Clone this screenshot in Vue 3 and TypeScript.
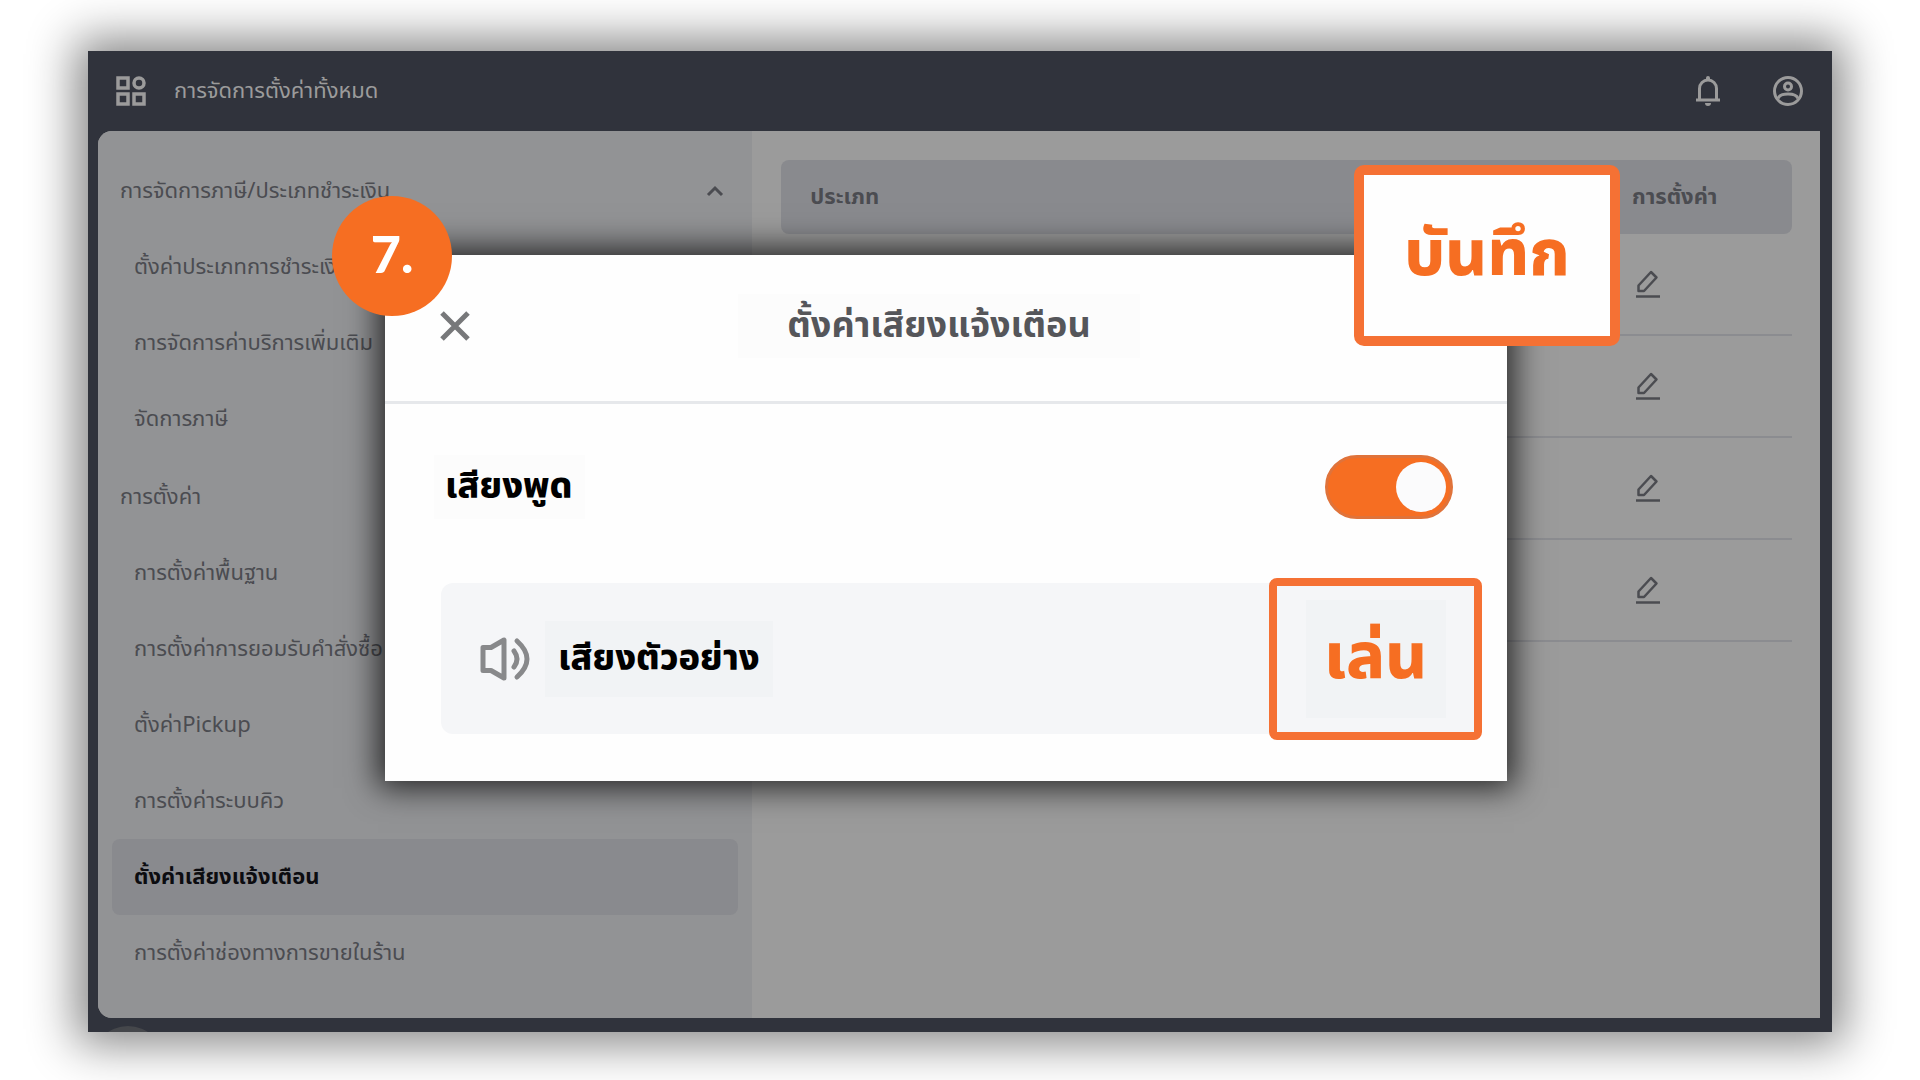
<script setup lang="ts">
import { ref } from 'vue'

interface MenuGroup {
  title: string
  open: boolean
  items: string[]
}

const groups: MenuGroup[] = [
  {
    title: 'การจัดการภาษี/ประเภทชำระเงิน',
    open: true,
    items: ['ตั้งค่าประเภทการชำระเงิน', 'การจัดการค่าบริการเพิ่มเติม', 'จัดการภาษี'],
  },
  {
    title: 'การตั้งค่า',
    open: false,
    items: [
      'การตั้งค่าพื้นฐาน',
      'การตั้งค่าการยอมรับคำสั่งซื้อ',
      'ตั้งค่าPickup',
      'การตั้งค่าระบบคิว',
      'ตั้งค่าเสียงแจ้งเตือน',
      'การตั้งค่าช่องทางการขายในร้าน',
    ],
  },
]

const active = ref('ตั้งค่าเสียงแจ้งเตือน')
const voiceOn = ref(true)
const rows = [1, 2, 3, 4]
</script>

<template>
  <div class="page">
    <div class="frame">
      <header class="topbar">
        <svg class="icon-apps" viewBox="0 0 30 30" aria-hidden="true">
          <rect x="2" y="2" width="10" height="10" />
          <circle cx="23" cy="7" r="5" />
          <rect x="2" y="18" width="10" height="10" />
          <rect x="18" y="18" width="10" height="10" />
        </svg>
        <span class="topbar-title">การจัดการตั้งค่าทั้งหมด</span>
        <button class="icon-btn" type="button" aria-label="notifications">
          <svg viewBox="0 0 30 30">
            <path d="M3 24H27M6.500 24V12.500a8.500 8.500 0 0 1 17 0V24" />
            <path class="solid" d="M13 4V2a2 2 0 0 1 4 0v2zM12 27h6a3 3 0 0 1-6 0z" />
          </svg>
        </button>
        <button class="icon-btn" type="button" aria-label="account">
          <svg viewBox="0 0 30 30">
            <circle cx="15" cy="15" r="13.500" />
            <circle cx="15" cy="10.500" r="3.500" />
            <path d="M5 22.500C7 16.500 23 16.500 25 22.500" />
          </svg>
        </button>
      </header>

      <div class="body">
        <nav class="sidebar">
          <section v-for="g in groups" :key="g.title" class="group">
            <button class="group-title" type="button">
              <span>{{ g.title }}</span>
              <svg v-if="g.open" class="chevron" viewBox="0 0 18 12" aria-hidden="true">
                <path d="M2 10L9 3L16 10" />
              </svg>
            </button>
            <a
              v-for="item in g.items"
              :key="item"
              href="#"
              class="item"
              :class="{ active: item === active }"
              @click.prevent="active = item"
            >{{ item }}</a>
          </section>
        </nav>

        <main class="content">
          <table class="table">
            <thead>
              <tr>
                <th scope="col">ประเภท</th>
                <th scope="col" class="col-set">การตั้งค่า</th>
              </tr>
            </thead>
            <tbody>
              <tr v-for="r in rows" :key="r">
                <td></td>
                <td class="col-set">
                  <button class="edit" type="button" aria-label="edit">
                    <svg viewBox="0 0 24 28">
                      <path d="M2.500 21V15.500L15 2l5.500 5.500L8 21z" />
                      <path d="M0 26.500H24" />
                    </svg>
                  </button>
                </td>
              </tr>
            </tbody>
          </table>
        </main>
      </div>
      <footer class="bottom"><span class="bubble"></span></footer>

      <div class="modal" role="dialog" aria-labelledby="dlg-title">
        <div class="modal-head">
          <button class="close" type="button" aria-label="close">
            <svg viewBox="0 0 30 30"><path d="M2 2L28 28M28 2L2 28" /></svg>
          </button>
          <h1 id="dlg-title" class="modal-title">ตั้งค่าเสียงแจ้งเตือน</h1>
        </div>
        <div class="modal-body">
          <div class="voice">
            <label class="voice-label" for="voice">เสียงพูด</label>
            <input id="voice" v-model="voiceOn" class="switch" type="checkbox" role="switch" />
          </div>
          <div class="sample">
            <svg class="speaker" viewBox="0 0 50 44" aria-hidden="true">
              <path d="M3 10.500H11L24 3V41L11 33.500H3z" />
              <path d="M34 14q6 8 0 16M37 4q20 18 0 36" />
            </svg>
            <span class="sample-label">เสียงตัวอย่าง</span>
            <button class="play" type="button"><span class="play-text">เล่น</span></button>
          </div>
        </div>
        <button class="save" type="button">บันทึก</button>
        <span class="step">7.</span>
      </div>
    </div>
  </div>
</template>

<style>
body {
  margin: 0;
  background: #fff;
}
</style>

<style scoped>
* {
  box-sizing: border-box;
}
.page {
  min-height: 100vh;
  padding: 51px 88px 48px;
  font-family: 'Noto Sans Thai', 'Noto Sans', sans-serif;
  font-size: 22px;
  color: #4b4c51;
  overflow: hidden;
}
button {
  padding: 0;
  border: 0;
  background: none;
  font: inherit;
  color: inherit;
  cursor: pointer;
}
svg {
  display: block;
  fill: none;
  stroke: currentColor;
}
.frame {
  position: relative;
  background: #30333c;
  box-shadow: 0 0 44px 12px rgba(0, 0, 0, 0.48);
}
.topbar {
  display: flex;
  align-items: center;
  height: 80px;
  padding: 0 29px 0 28px;
  color: #9b9b9b;
}
.icon-apps {
  width: 30px;
  height: 30px;
  stroke-width: 3.5;
}
.topbar-title {
  flex: 1;
  margin-left: 28px;
}
.icon-btn {
  margin-left: 50px;
}
.icon-btn svg {
  width: 30px;
  height: 30px;
  stroke-width: 3;
}
.icon-btn .solid {
  fill: currentColor;
  stroke: none;
}
.body {
  display: flex;
  min-height: 887px;
  margin: 0 12px 0 10px;
  border-radius: 14px 0 0 14px;
  background: #9b9b9b;
  overflow: hidden;
}
.sidebar {
  width: 38%;
  padding: 22px 14px 0;
  background: #929395;
}
.group {
  margin-bottom: 2px;
}
.group-title {
  display: flex;
  align-items: center;
  justify-content: space-between;
  width: 100%;
  height: 76px;
  padding: 0 14px 0 8px;
  text-align: left;
}
.chevron {
  width: 18px;
  height: 12px;
  stroke-width: 3;
}
.item {
  display: flex;
  align-items: center;
  height: 76px;
  padding-left: 22px;
  border-radius: 8px;
  color: inherit;
  text-decoration: none;
}
.item.active {
  background: #898a8e;
  color: #0c0c10;
  font-weight: 700;
}
.content {
  flex: 1;
  padding: 29px 28px 0 29px;
}
.table {
  width: 100%;
  border-collapse: separate;
  border-spacing: 0;
}
.table th {
  height: 74px;
  padding: 0 0 0 29px;
  background: #898a8e;
  text-align: left;
  font-weight: 700;
}
.table th:first-child {
  border-radius: 8px 0 0 8px;
}
.table th:last-child {
  border-radius: 0 8px 8px 0;
}
.table td {
  height: 102px;
  padding: 0;
  border-bottom: 2px solid #8b8c90;
}
.table .col-set {
  width: 160px;
  padding-left: 0;
}
.edit {
  display: block;
  margin-left: 4px;
}
.edit svg {
  width: 24px;
  height: 28px;
  stroke-width: 2.5;
  stroke-linejoin: round;
}
.bottom {
  height: 14px;
  padding: 8px 0 0 4px;
  overflow: hidden;
}
.bubble {
  display: block;
  width: 72px;
  height: 72px;
  border-radius: 50%;
  background: #45474b;
}
.modal {
  position: absolute;
  top: 204px;
  left: 297px;
  right: 325px;
  background: #fefefe;
  box-shadow: 0 0 30px 7px rgba(0, 0, 0, 0.75);
}
.modal-head {
  display: flex;
  align-items: center;
  height: 149px;
  padding: 0 55px 4px;
  border-bottom: 3px solid #e6e8eb;
}
.close {
  color: #77787a;
}
.close svg {
  width: 30px;
  height: 30px;
  stroke-width: 5;
}
.modal-title {
  flex: 0 1 402px;
  margin: 0 auto;
  background: #fcfcfc;
  line-height: 64px;
  text-align: center;
  font-size: 36px;
  font-weight: 700;
  color: #55565a;
}
.modal-head::after {
  content: '';
  width: 44px;
}
.modal-body {
  padding: 51px 35px 47px 49px;
}
.voice {
  display: flex;
  align-items: center;
  justify-content: space-between;
  height: 64px;
  padding-right: 19px;
}
.voice-label,
.sample-label {
  font-size: 36px;
  font-weight: 800;
  color: #000;
}
.voice-label {
  padding: 0 12px 0 11px;
  background: #fcfcfc;
  line-height: 64px;
}
.switch {
  appearance: none;
  display: flex;
  align-items: center;
  justify-content: flex-start;
  width: 128px;
  height: 64px;
  margin: 0;
  padding: 0 4px;
  border: 3px solid #e0733a;
  border-radius: 32px;
  background: #f66e22;
}
.switch:checked {
  justify-content: flex-end;
}
.switch::before {
  content: '';
  width: 50px;
  height: 50px;
  border-radius: 50%;
  background: #fbfbfc;
}
.sample {
  display: flex;
  align-items: center;
  height: 151px;
  margin: 64px 0 0 7px;
  padding-left: 39px;
  border-radius: 12px;
  background: #f5f6f8;
}
.speaker {
  width: 50px;
  height: 44px;
  margin-right: 15px;
  color: #88898b;
  stroke-width: 5;
  stroke-linejoin: round;
  stroke-linecap: round;
}
.sample-label {
  padding: 0 13px;
  background: #f1f3f5;
  line-height: 76px;
}
.play {
  display: flex;
  align-items: center;
  justify-content: center;
  width: 213px;
  height: 162px;
  margin: 0 -10px 0 auto;
  border: 8px solid #f57134;
  border-radius: 8px;
  background: #f5f6f8;
  color: #f66e22;
  font-size: 64px;
  font-weight: 800;
}
.play-text {
  width: 140px;
  background: #f1f3f5;
  line-height: 118px;
}
.save {
  position: absolute;
  top: -90px;
  right: -113px;
  width: 266px;
  height: 181px;
  border: 10px solid #f57134;
  border-radius: 10px;
  background: #fefefe;
  color: #f66e22;
  font-size: 64px;
  font-weight: 800;
}
.step {
  position: absolute;
  top: -59px;
  left: -53px;
  display: flex;
  align-items: center;
  justify-content: center;
  width: 120px;
  height: 120px;
  padding-bottom: 6px;
  border-radius: 50%;
  background: #f66e22;
  color: #fff;
  font-family: Lato, sans-serif;
  font-size: 52px;
  font-weight: 900;
}
</style>
